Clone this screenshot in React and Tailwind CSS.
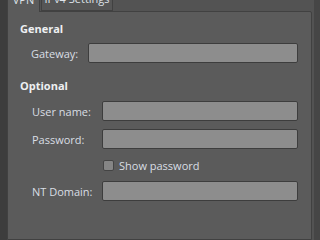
import React, { useState } from 'react';

const Field = ({ label, labelWidth }) => (
  <div className="flex items-center h-[20px]">
    <span className="shrink-0 text-[#d9dee4]" style={{ width: labelWidth }}>{label}</span>
    <input
      type="text"
      className="w-[196px] flex-1 h-[20px] bg-[#8d8d8d] border border-[#3d3d3d] rounded-[2px] outline-none px-1 text-[#222]"
    />
  </div>
);

const App = () => {
  const [showPassword, setShowPassword] = useState(false);

  return (
    <div className="w-[320px] h-[240px] overflow-hidden flex bg-[#535353] font-['Open_Sans',sans-serif] text-[11px] leading-[15px]">
      <div className="w-[7px] bg-[#3d3d3d]" />

      <div className="w-[305px] flex flex-col">
        {/* Tabs */}
        <div className="flex h-[22px] -mt-[11px] shrink-0 relative z-10">
          <div className="w-[33px] h-[23px] bg-[#5b5b5b] border-l border-t border-r border-[#414141] text-[#dfe4ea] flex items-center justify-center pb-[4px]">
            VPN
          </div>
          <div className="ml-[1px] w-[72px] h-[22px] bg-[#565656] border border-[#414141] text-[#dfe4ea] flex items-center justify-center pb-[3px]">
            IPv4 Settings
          </div>
        </div>

        {/* Pane */}
        <div className="flex-1 border border-[#414141] bg-[#5b5b5b] rounded-tr-[2px] pl-[12px] pr-[13px] pt-[9px]">
          <div className="font-bold text-[#eef0f2]">General</div>
          <div className="mt-[7px] pl-[11px]">
            <Field label="Gateway:" labelWidth={57} />
          </div>

          <div className="mt-[15px] font-bold text-[#eef0f2]">Optional</div>
          <div className="mt-[8px] pl-[12px] flex flex-col gap-[8px]">
            <Field label="User name:" labelWidth={70} />
            <Field label="Password:" labelWidth={70} />
            <label className="flex items-center h-[16px] pl-[71px] text-[#d9dee4]">
              <span
                onClick={() => setShowPassword(!showPassword)}
                className="w-[11px] h-[11px] bg-[#858585] border border-[#444] rounded-[2px] shrink-0"
              />
              <span className="ml-[5px]">Show password</span>
            </label>
            <Field label="NT Domain:" labelWidth={70} />
          </div>
        </div>
      </div>

      <div className="w-[2px]" />
      <div className="w-[6px] bg-[#464646]" />
    </div>
  );
};

export default App;
